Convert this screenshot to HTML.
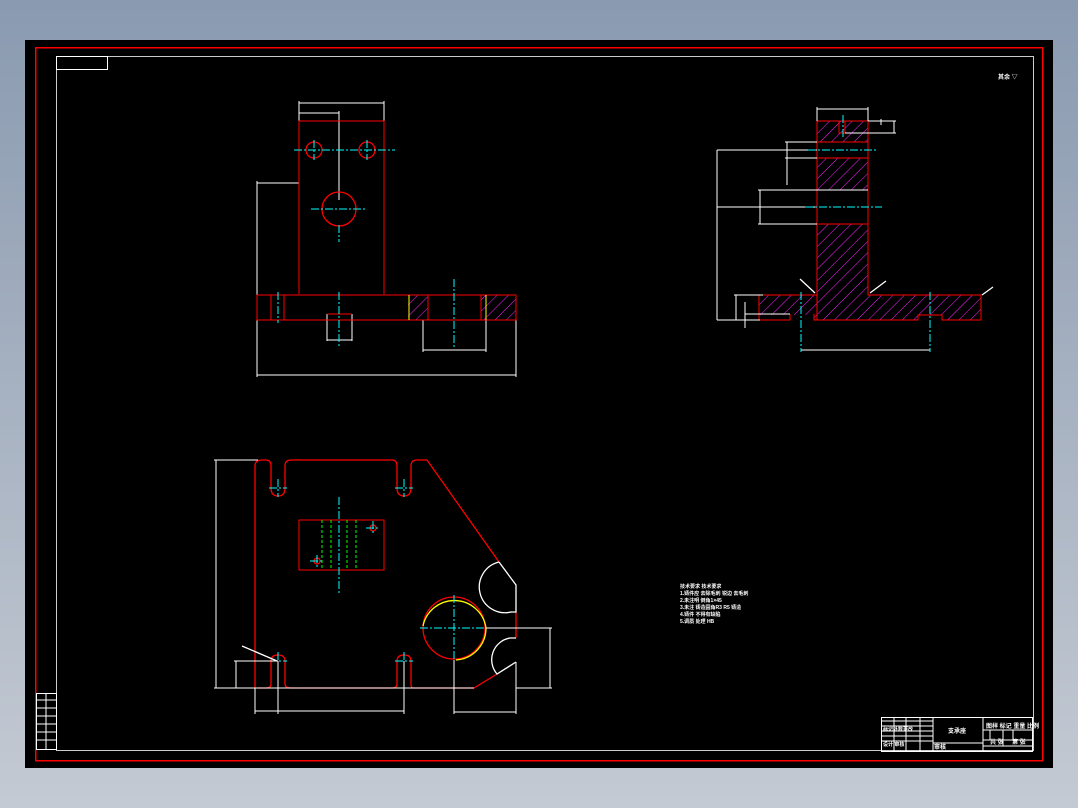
<!DOCTYPE html>
<html><head><meta charset="utf-8"><style>
html,body{margin:0;padding:0;width:1078px;height:808px;overflow:hidden;background:linear-gradient(#8a9ab0,#c4cad3);font-family:"Liberation Sans","Noto Sans CJK SC",sans-serif}
svg{position:absolute;left:0;top:0}
text{font-family:"Liberation Sans","Noto Sans CJK SC",sans-serif;fill:#fff;font-weight:bold}
</style></head><body>
<svg width="1078" height="808" viewBox="0 0 1078 808" shape-rendering="crispEdges">
<defs>
<pattern id="h" patternUnits="userSpaceOnUse" width="8" height="8" patternTransform="rotate(45)"><line x1="0" y1="0" x2="0" y2="8" stroke="#ff20ff" stroke-width="1.2"/></pattern>
</defs>
<rect x="25" y="40" width="1028" height="728" fill="#000"/>
<rect x="35.5" y="47.5" width="1007" height="713" fill="none" stroke="#f00" stroke-width="1.5"/>
<rect x="56.5" y="56.5" width="977" height="694" fill="none" stroke="#ccc" stroke-width="1"/>
<rect x="56.5" y="56.5" width="51" height="13" fill="none" stroke="#fff"/>

<!-- front view -->
<g fill="none" stroke-width="1.3">
<g stroke="#fff">
<line x1="299" y1="103" x2="384" y2="103"/><line x1="299" y1="101" x2="299" y2="121"/><line x1="384" y1="101" x2="384" y2="121"/>
<line x1="299" y1="113" x2="339" y2="113"/><line x1="339" y1="111" x2="339" y2="200"/>
<line x1="257" y1="183" x2="299" y2="183"/><line x1="257" y1="181" x2="257" y2="377"/>
<line x1="257" y1="375" x2="516" y2="375"/><line x1="516" y1="320" x2="516" y2="377"/>
<line x1="327" y1="314" x2="327" y2="341"/><line x1="352" y1="314" x2="352" y2="341"/><line x1="327" y1="340" x2="352" y2="340"/>
<line x1="423" y1="320" x2="423" y2="352"/><line x1="486" y1="320" x2="486" y2="352"/><line x1="423" y1="350" x2="486" y2="350"/>
</g>
<rect x="408" y="295" width="20" height="25" fill="url(#h)" stroke="none"/>
<rect x="481" y="295" width="35" height="25" fill="url(#h)" stroke="none"/>
<g stroke="#f00">
<polyline points="299,294 299,121 384,121 384,294"/>
<circle cx="314" cy="150" r="8" shape-rendering="auto"/><circle cx="367" cy="150" r="8" shape-rendering="auto"/><circle cx="339" cy="209" r="17" shape-rendering="auto"/>
<rect x="257" y="295" width="259" height="25"/>
<line x1="271" y1="295" x2="271" y2="320"/><line x1="284" y1="295" x2="284" y2="320"/>
<line x1="428" y1="295" x2="428" y2="320"/><line x1="481" y1="295" x2="481" y2="320"/>
<line x1="327" y1="314" x2="352" y2="314"/>
</g>
<g stroke="#ff0"><line x1="409" y1="295" x2="409" y2="320"/><line x1="486" y1="295" x2="486" y2="320"/></g>
<g stroke="#0ff" stroke-dasharray="8,2,2,2">
<line x1="294" y1="150" x2="395" y2="150"/><line x1="314" y1="140" x2="314" y2="160"/><line x1="367" y1="140" x2="367" y2="160"/>
<line x1="311" y1="209" x2="367" y2="209"/><line x1="339" y1="225" x2="339" y2="242"/>
<line x1="278" y1="292" x2="278" y2="323"/><line x1="339" y1="292" x2="339" y2="347"/><line x1="454" y1="279" x2="454" y2="348"/>
</g>
</g>

<!-- side section -->
<g fill="none" stroke-width="1.3">
<rect x="817" y="121" width="51" height="21" fill="url(#h)" stroke="none"/>
<rect x="817" y="158" width="51" height="32" fill="url(#h)" stroke="none"/>
<polygon points="817,224 868,224 868,295 981,295 981,320 942,320 942,315 918,315 918,320 814,320 814,315 759,315 759,295 817,295" fill="url(#h)" stroke="none"/>
<g stroke="#f00">
<polyline points="817,320 817,121 868,121 868,295 981,295 981,320 942,320 942,315 918,315 918,320 814,320 814,314"/>
<polyline points="817,295 759,295 759,320 790,320 790,314"/>
<line x1="817" y1="142" x2="868" y2="142"/><line x1="817" y1="158" x2="868" y2="158"/>
<line x1="817" y1="190" x2="868" y2="190" stroke="#fff"/><line x1="817" y1="224" x2="868" y2="224"/>
<rect x="839" y="121" width="6" height="12"/>
</g>
<g stroke="#fff">
<line x1="817" y1="109" x2="868" y2="109"/><line x1="817" y1="107" x2="817" y2="121"/><line x1="868" y1="107" x2="868" y2="121"/>
<line x1="868" y1="121" x2="896" y2="121"/><line x1="845" y1="133" x2="896" y2="133"/><line x1="881" y1="119" x2="881" y2="125"/><line x1="894" y1="121" x2="894" y2="133"/>
<line x1="717" y1="150" x2="817" y2="150"/><line x1="717" y1="207" x2="817" y2="207"/><line x1="717" y1="320" x2="760" y2="320"/><line x1="717" y1="150" x2="717" y2="320"/>
<line x1="785" y1="142" x2="817" y2="142"/><line x1="785" y1="158" x2="817" y2="158"/><line x1="787" y1="142" x2="787" y2="185"/>
<line x1="758" y1="190" x2="817" y2="190"/><line x1="758" y1="224" x2="817" y2="224"/><line x1="760" y1="190" x2="760" y2="224"/>
<line x1="734" y1="295" x2="763" y2="295"/><line x1="736" y1="295" x2="736" y2="320"/><line x1="745" y1="302" x2="745" y2="328"/><line x1="745" y1="314" x2="790" y2="314"/>
<line x1="801" y1="350" x2="930" y2="350"/>
<g shape-rendering="auto"><line x1="800" y1="279" x2="815" y2="293"/><line x1="870" y1="293" x2="886" y2="281"/><line x1="982" y1="295" x2="993" y2="287"/></g>
</g>
<g stroke="#0ff" stroke-dasharray="8,2,2,2">
<line x1="808" y1="150" x2="878" y2="150"/><line x1="805" y1="207" x2="882" y2="207"/>
<line x1="801" y1="292" x2="801" y2="352"/><line x1="930" y1="292" x2="930" y2="352"/><line x1="843" y1="115" x2="843" y2="138"/>
</g>
</g>

<!-- top view -->
<g fill="none" stroke-width="1.3" shape-rendering="auto">
<path stroke="#f00" d="M255,688 L255,466 Q255,460 262,460 L266,460 Q271,460 271,466 L271,488 Q271,496 278,496 Q285,496 285,488 L285,466 Q285,460 291,460 L392,460 Q397,460 397,466 L397,488 Q397,496 404,496 Q411,496 411,488 L411,466 Q411,460 417,460 L427,460 L499,562"/>
<path stroke="#f00" d="M516,612 L516,638 M497,674 L474,688 L413,688 Q411,688 411,684 L411,661 Q411,655 404,655 Q397,655 397,661 L397,684 Q397,688 392,688 L291,688 Q285,688 285,684 L285,661 Q285,655 278,655 Q271,655 271,661 L271,684 Q271,688 266,688 L258,688"/>
<path stroke="#fff" d="M499,562 L516,585 L516,612 L511,612 A24,24 0 0 1 499,562 M516,638 L510,638 A22,22 0 0 0 497,674 L516,662"/>
<rect stroke="#f00" x="299" y="520" width="85" height="50" shape-rendering="crispEdges"/>
<g stroke="#0f0" stroke-dasharray="3,2" shape-rendering="crispEdges"><line x1="322" y1="520" x2="322" y2="570"/><line x1="331" y1="520" x2="331" y2="570"/><line x1="347" y1="520" x2="347" y2="570"/><line x1="356" y1="520" x2="356" y2="570"/></g>
<circle cx="454" cy="628" r="31" stroke="#f00"/>
<path stroke="#ff0" d="M423,626 A32,32 0 0 1 486,628 A32,32 0 0 1 456,660"/>
<circle cx="373" cy="528" r="3" stroke="#f00"/><circle cx="317" cy="561" r="3" stroke="#f00"/>
<g stroke="#0ff" stroke-dasharray="8,2,2,2" shape-rendering="crispEdges">
<line x1="339" y1="497" x2="339" y2="593"/><line x1="420" y1="628" x2="490" y2="628"/><line x1="454" y1="595" x2="454" y2="662"/>
<line x1="269" y1="488" x2="287" y2="488"/><line x1="278" y1="479" x2="278" y2="497"/><line x1="395" y1="488" x2="413" y2="488"/><line x1="404" y1="479" x2="404" y2="497"/>
<line x1="269" y1="661" x2="287" y2="661"/><line x1="278" y1="652" x2="278" y2="670"/><line x1="395" y1="661" x2="413" y2="661"/><line x1="404" y1="652" x2="404" y2="670"/>
<line x1="366" y1="528" x2="380" y2="528"/><line x1="373" y1="521" x2="373" y2="535"/><line x1="310" y1="561" x2="324" y2="561"/><line x1="317" y1="555" x2="317" y2="567"/>
</g>
<g stroke="#fff" shape-rendering="crispEdges">
<line x1="214" y1="460" x2="258" y2="460"/><line x1="216" y1="460" x2="216" y2="688"/><line x1="214" y1="688" x2="474" y2="688"/>
<line x1="234" y1="661" x2="278" y2="661"/><line x1="236" y1="661" x2="236" y2="688"/>
<line x1="255" y1="688" x2="255" y2="714"/><line x1="278" y1="661" x2="278" y2="714"/><line x1="404" y1="661" x2="404" y2="714"/><line x1="255" y1="711" x2="404" y2="711"/>
<line x1="454" y1="660" x2="454" y2="714"/><line x1="516" y1="662" x2="516" y2="714"/><line x1="454" y1="712" x2="516" y2="712"/>
<line x1="486" y1="628" x2="552" y2="628"/><line x1="550" y1="628" x2="550" y2="688"/><line x1="516" y1="688" x2="552" y2="688"/>
</g>
<line x1="242" y1="646" x2="277" y2="661" stroke="#fff"/>
</g>

<!-- notes -->
<g font-size="5">
<text x="680" y="588">技术要求 技术要求</text><text x="680" y="595">1.铸件应 去除毛刺 锐边 去毛刺</text>
<text x="680" y="602">2.未注明 倒角1×45</text><text x="680" y="609">3.未注 铸造圆角R3 R5 铸造</text>
<text x="680" y="616">4.铸件 不得有缺陷</text><text x="680" y="623">5.调质 处理 HB</text>
<text x="998" y="79" font-size="6">其余 ▽</text>
</g>

<!-- title block -->
<g fill="none" stroke="#fff" stroke-width="1">
<rect x="881.5" y="717.5" width="151" height="34"/>
<line x1="933" y1="717" x2="933" y2="751"/><line x1="983" y1="717" x2="983" y2="751"/>
<line x1="881" y1="721" x2="933" y2="721"/><line x1="881" y1="726" x2="933" y2="726"/><line x1="881" y1="731" x2="933" y2="731"/><line x1="881" y1="736" x2="933" y2="736"/><line x1="881" y1="741" x2="933" y2="741"/>
<line x1="894" y1="717" x2="894" y2="751"/><line x1="906" y1="717" x2="906" y2="751"/><line x1="920" y1="717" x2="920" y2="751"/>
<line x1="933" y1="743" x2="983" y2="743"/>
<line x1="983" y1="730" x2="1033" y2="730"/><line x1="983" y1="740" x2="1033" y2="740"/><line x1="983" y1="746" x2="1033" y2="746"/>
<line x1="990" y1="730" x2="990" y2="740"/><line x1="1003" y1="730" x2="1003" y2="746"/><line x1="1013" y1="730" x2="1013" y2="740"/>
<rect x="36.5" y="693.5" width="20" height="56"/>
<line x1="36" y1="700" x2="56" y2="700"/><line x1="36" y1="708" x2="56" y2="708"/><line x1="36" y1="716" x2="56" y2="716"/><line x1="36" y1="724" x2="56" y2="724"/><line x1="36" y1="732" x2="56" y2="732"/><line x1="36" y1="740" x2="56" y2="740"/>
<line x1="46" y1="693" x2="46" y2="750"/>
</g>
<g font-size="6">
<text x="948" y="733">支承座</text><text x="986" y="728">图样 标记 重量 比例</text>
<text x="990" y="744">共 张</text><text x="1012" y="744">第 张</text><text x="934" y="749">审核</text>
<text x="883" y="731" font-size="5">标记处数更改</text><text x="883" y="746" font-size="5">设计 审核</text>
</g>
</svg>
</body></html>
